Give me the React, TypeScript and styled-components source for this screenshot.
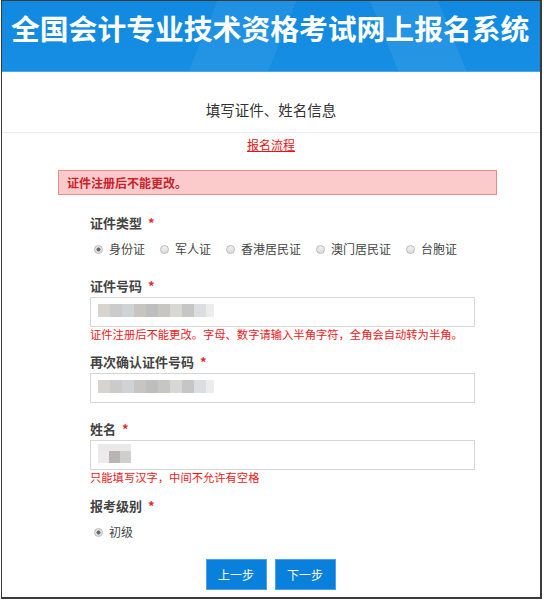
import React from 'react'
import styled, { createGlobalStyle } from 'styled-components'

const GlobalStyle = createGlobalStyle`
  html, body {
    margin: 0;
    padding: 0;
    background: #fff;
  }
  body {
    font-family: 'Noto Sans CJK SC', 'Liberation Sans', sans-serif;
    color: #333;
  }
`

const Frame = styled.div`
  box-sizing: border-box;
  width: 541px;
  height: 599px;
  margin-left: 1px;
  border: 1px solid #3a3a3a;
  border-right-width: 2px;
  border-bottom-width: 2px;
  overflow: hidden;
  background: #fff;
`

const Header = styled.div`
  height: 71px;
  box-sizing: border-box;
  padding-top: 7px;
  background:
    linear-gradient(112deg, transparent 0 38%, rgba(255, 255, 255, 0.06) 38% 52%, transparent 52%),
    linear-gradient(68deg, transparent 0 70%, rgba(255, 255, 255, 0.07) 70% 82%, transparent 82%),
    linear-gradient(180deg, #1189e1 0%, #168ee2 100%);
  border-bottom: 1px solid #4aa6ea;
`

const Title = styled.h1`
  margin: 0;
  padding-left: 9px;
  font-size: 28.8px;
  line-height: 40px;
  font-weight: 700;
  color: #fff;
  white-space: nowrap;
`

const SubTitle = styled.div`
  padding: 28px 0 12px;
  line-height: 20px;
  font-size: 14.5px;
  text-align: center;
  color: #333;
  border-bottom: 1px solid #ececec;
`

const FlowLink = styled.a`
  display: block;
  width: max-content;
  margin: 4px auto 0;
  line-height: 16px;
  font-size: 12px;
  color: #ee1111;
  text-decoration: underline;
`

const Alert = styled.div`
  box-sizing: border-box;
  width: 439px;
  height: 25px;
  margin: 17px 0 0 56px;
  padding-left: 8px;
  background: #fbcaca;
  border: 1px solid #ea8a8a;
  color: #c8242b;
  font-size: 12px;
  font-weight: 700;
  line-height: 23px;
`

const Form = styled.div`
  width: 385px;
  margin-left: 88px;
  padding-top: 19px;
`

const Field = styled.div<{ $bottom: number }>`
  margin-bottom: ${({ $bottom }) => $bottom}px;
`

const Label = styled.div`
  line-height: 18px;
  font-size: 13px;
  font-weight: 700;
  color: #444;
`

const Star = styled.span`
  margin-left: 6px;
  color: #e62a2a;
  font-weight: 700;
`

const RadioRow = styled.div`
  display: flex;
  align-items: center;
  gap: 15px;
  margin-top: 8px;
  padding-left: 4px;
  line-height: 18px;
`

const RadioItem = styled.label`
  display: flex;
  flex-shrink: 0;
  align-items: center;
  gap: 6px;
  font-size: 12px;
  color: #444;
  white-space: nowrap;
`

const RadioDot = styled.span<{ $checked?: boolean }>`
  box-sizing: border-box;
  width: 9px;
  height: 9px;
  border-radius: 50%;
  border: 1px solid #b9b9b9;
  background: ${({ $checked }) =>
    $checked
      ? 'radial-gradient(circle, #6a6a6a 0 1.8px, #e6e6e6 2.3px)'
      : 'linear-gradient(180deg, #f2f2f2, #dcdcdc)'};
`

const Input = styled.div<{ $top?: number }>`
  box-sizing: border-box;
  height: 30px;
  margin-top: 2px;
  padding: ${({ $top = 6 }) => $top}px 0 0 7px;
  border: 1px solid #d6d6d6;
  background: #fff;
`

const Blur = styled.div`
  display: flex;
  filter: blur(0.6px);
`

const BlurCell = styled.span<{ $w: number; $h: number }>`
  display: block;
  width: ${({ $w }) => $w}px;
  height: ${({ $h }) => $h}px;
`

const Help = styled.div`
  line-height: 14px;
  font-size: 11.3px;
  color: #f0181b;
  white-space: nowrap;
`

const Buttons = styled.div`
  display: flex;
  justify-content: center;
  gap: 8px;
  width: 537px;
  margin: 18px 0 0 -88px;
`

const Button = styled.button`
  width: 61px;
  height: 31px;
  padding: 0;
  border: 1px solid #4ca2ea;
  background: #0a80dd;
  color: #fff;
  font-family: inherit;
  font-size: 12px;
  cursor: pointer;
`

const idColors = ['#d7d3cf', '#cbcbcb', '#d0d3d5', '#c7c4c1', '#bebebe', '#c8c6c3', '#d7d8d6', '#c6c6c6', '#dcdde0', '#ececec']

const BlurredId: React.FC = () => (
  <Blur>
    {idColors.map((c, i) => (
      <BlurCell key={i} $w={i === 9 ? 8 : 12} $h={13} style={{ background: c }} />
    ))}
  </Blur>
)

const BlurredName: React.FC = () => (
  <Blur>
    {['#ebebeb', '#b8b4b4', '#cfcfcf'].map((c, i) => (
      <BlurCell key={i} $w={11} $h={19} style={{ background: `linear-gradient(180deg, #e9e9e9 0 35%, ${c} 35%)` }} />
    ))}
  </Blur>
)

const types = ['身份证', '军人证', '香港居民证', '澳门居民证', '台胞证']

export default function App() {
  return (
    <>
      <GlobalStyle />
      <Frame>
        <Header>
          <Title>全国会计专业技术资格考试网上报名系统</Title>
        </Header>
        <SubTitle>填写证件、姓名信息</SubTitle>
        <FlowLink href="#">报名流程</FlowLink>
        <Alert>证件注册后不能更改。</Alert>
        <Form>
          <Field $bottom={19}>
            <Label>
              证件类型<Star>*</Star>
            </Label>
            <RadioRow>
              {types.map((t, i) => (
                <RadioItem key={t}>
                  <RadioDot $checked={i === 0} />
                  {t}
                </RadioItem>
              ))}
            </RadioRow>
          </Field>
          <Field $bottom={12}>
            <Label>
              证件号码<Star>*</Star>
            </Label>
            <Input>
              <BlurredId />
            </Input>
            <Help>证件注册后不能更改。字母、数字请输入半角字符，全角会自动转为半角。</Help>
          </Field>
          <Field $bottom={17}>
            <Label>
              再次确认证件号码<Star>*</Star>
            </Label>
            <Input>
              <BlurredId />
            </Input>
          </Field>
          <Field $bottom={13}>
            <Label>
              姓名<Star>*</Star>
            </Label>
            <Input $top={3}>
              <BlurredName />
            </Input>
            <Help>只能填写汉字，中间不允许有空格</Help>
          </Field>
          <Field $bottom={0}>
            <Label>
              报考级别<Star>*</Star>
            </Label>
            <RadioRow>
              <RadioItem>
                <RadioDot $checked />
                初级
              </RadioItem>
            </RadioRow>
          </Field>
          <Buttons>
            <Button>上一步</Button>
            <Button>下一步</Button>
          </Buttons>
        </Form>
      </Frame>
    </>
  )
}
